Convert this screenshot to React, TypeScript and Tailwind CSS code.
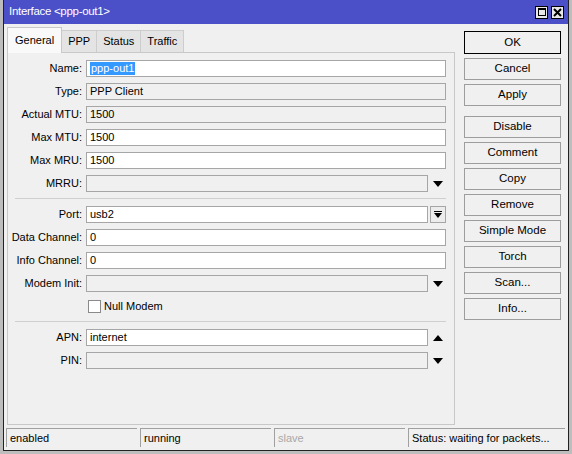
import type { ReactNode } from 'react';

type Field = {
  label: string;
  value?: string;
  editable?: boolean;
  arrow?: 'down' | 'up' | 'button';
  selected?: boolean;
};

const topFields: Field[] = [
  { label: 'Name:', value: 'ppp-out1', editable: true, selected: true },
  { label: 'Type:', value: 'PPP Client' },
  { label: 'Actual MTU:', value: '1500' },
  { label: 'Max MTU:', value: '1500', editable: true },
  { label: 'Max MRU:', value: '1500', editable: true },
  { label: 'MRRU:', arrow: 'down' },
];

const midFields: Field[] = [
  { label: 'Port:', value: 'usb2', editable: true, arrow: 'button' },
  { label: 'Data Channel:', value: '0', editable: true },
  { label: 'Info Channel:', value: '0', editable: true },
  { label: 'Modem Init:', arrow: 'down' },
];

const apnFields: Field[] = [
  { label: 'APN:', value: 'internet', editable: true, arrow: 'up' },
  { label: 'PIN:', arrow: 'down' },
];

const buttons = [
  ['OK', 'Cancel', 'Apply'],
  ['Disable', 'Comment', 'Copy', 'Remove', 'Simple Mode', 'Torch', 'Scan...', 'Info...'],
];

function Triangle({ up }: { up?: boolean }) {
  return (
    <svg width="10" height="6" viewBox="0 0 10 6" className="block">
      <path d={up ? 'M0 6h10L5 0z' : 'M0 0h10L5 6z'} fill="#000" />
    </svg>
  );
}

function Row({ f }: { f: Field }) {
  const box = (
    <div
      className={`flex h-[17px] min-w-0 flex-1 items-center border border-[#a6a6a6] pl-[3px] ${
        f.editable ? 'bg-white' : 'bg-[#f0f0f0]'
      }`}
    >
      {f.selected ? (
        <span className="bg-[#3399ff] px-[1px] leading-[13px] text-white">{f.value}</span>
      ) : (
        <span>{f.value}</span>
      )}
    </div>
  );

  return (
    <div className="mb-[6px] flex h-[17px] items-center">
      <div className="w-[74px] shrink-0 text-right">{f.label}</div>
      <div className="ml-[4px] flex min-w-0 flex-1 items-center">
        {box}
        {f.arrow === 'down' || f.arrow === 'up' ? (
          <div className="flex w-[18px] shrink-0 justify-center pl-[2px]">
            <Triangle up={f.arrow === 'up'} />
          </div>
        ) : null}
        {f.arrow === 'button' ? (
          <div className="ml-[2px] flex h-[17px] w-[16px] shrink-0 flex-col items-center justify-center gap-[1px] border border-[#a6a6a6] bg-[#ececec]">
            <div className="h-[1px] w-[8px] bg-black" />
            <svg width="8" height="5" viewBox="0 0 8 5" className="block">
              <path d="M0 0h8L4 5z" fill="#000" />
            </svg>
          </div>
        ) : null}
      </div>
    </div>
  );
}

function Separator() {
  return <div className="mt-[3px] mb-[7px] ml-[7px] h-[1px] bg-[#cfcfcf]" />;
}

function Tab({ children, active }: { children: ReactNode; active?: boolean }) {
  return active ? (
    <div className="relative z-10 -mb-[1px] flex h-[26px] items-center border border-b-0 border-[#c8c8c8] bg-[#f9f9f9] px-[7px] pb-[1px]">
      {children}
    </div>
  ) : (
    <div className="flex h-[22px] items-center border border-l-0 border-b-0 border-[#cdcdcd] bg-[#e4e4e4] px-[6px]">
      {children}
    </div>
  );
}

function Segment({ children, w, dim }: { children: ReactNode; w: string; dim?: boolean }) {
  return (
    <div
      className={`flex h-[19px] items-center border-t border-l border-[#a0a0a0] pl-[3px] ${w} ${
        dim ? 'text-[#a8a8a8]' : ''
      }`}
    >
      {children}
    </div>
  );
}

export default function App() {
  return (
    <div className="h-[454px] w-[572px] overflow-hidden bg-[#bdbdbd] pl-[3px] font-['Liberation_Sans',Arial,sans-serif] text-[11px] text-black">
      <div className="flex h-[451px] w-[566px] flex-col border border-t-0 border-[#222] bg-[#f0f0f0]">
        {/* barre de titre */}
        <div className="flex h-[24px] shrink-0 items-center bg-[#4b4fc8] pl-[5px] pr-[4px] text-[11.5px] text-white">
          <span className="flex-1 tracking-[-0.3px]">Interface &lt;ppp-out1&gt;</span>
          <div className="flex gap-[3px]">
            <div className="flex h-[13px] w-[13px] items-center justify-center border border-black bg-[#e8e8e8]">
              <div className="h-[8px] w-[8px] border border-black border-t-2" />
            </div>
            <div className="flex h-[13px] w-[13px] items-center justify-center border border-black bg-[#e8e8e8]">
              <svg width="9" height="9" viewBox="0 0 9 9">
                <path d="M1 1l7 7M8 1l-7 7" stroke="#000" strokeWidth="2" />
              </svg>
            </div>
          </div>
        </div>

        <div className="flex flex-1 pl-[3px]">
          <div className="flex w-[448px] flex-col pt-[3px]">
            <div className="flex h-[25px] items-end">
              <Tab active>General</Tab>
              <Tab>PPP</Tab>
              <Tab>Status</Tab>
              <Tab>Traffic</Tab>
            </div>
            <div className="h-[373px] border border-[#c8c8c8] pt-[7px] pr-[8px]">
              {topFields.map((f) => (
                <Row key={f.label} f={f} />
              ))}
              <Separator />
              {midFields.map((f) => (
                <Row key={f.label} f={f} />
              ))}
              <div className="mb-[6px] flex h-[17px] items-center pl-[80px]">
                <div className="h-[13px] w-[13px] border border-[#8a8a8a] bg-white" />
                <span className="ml-[3px]">Null Modem</span>
              </div>
              <Separator />
              {apnFields.map((f) => (
                <Row key={f.label} f={f} />
              ))}
            </div>
          </div>

          <div className="ml-[9px] flex w-[97px] flex-col pt-[7px]">
            {buttons.map((group, gi) => (
              <div key={gi} className={`flex flex-col gap-[4px] ${gi ? 'mt-[10px]' : ''}`}>
                {group.map((b) => (
                  <div
                    key={b}
                    className={`flex items-center justify-center border bg-[#f0f0f0] text-[11.5px] ${
                      b === 'OK' ? 'h-[23px] border-black' : 'h-[22px] border-[#9d9d9d]'
                    }`}
                  >
                    {b}
                  </div>
                ))}
              </div>
            ))}
          </div>
        </div>

        {/* barre d'état */}
        <div className="flex gap-[3px] pt-[3px] pb-[3px] pl-[2px]">
          <Segment w="w-[131px]">enabled</Segment>
          <Segment w="w-[131px]">running</Segment>
          <Segment w="w-[131px]" dim>
            slave
          </Segment>
          <Segment w="w-[157px]">Status: waiting for packets...</Segment>
        </div>
      </div>
    </div>
  );
}
